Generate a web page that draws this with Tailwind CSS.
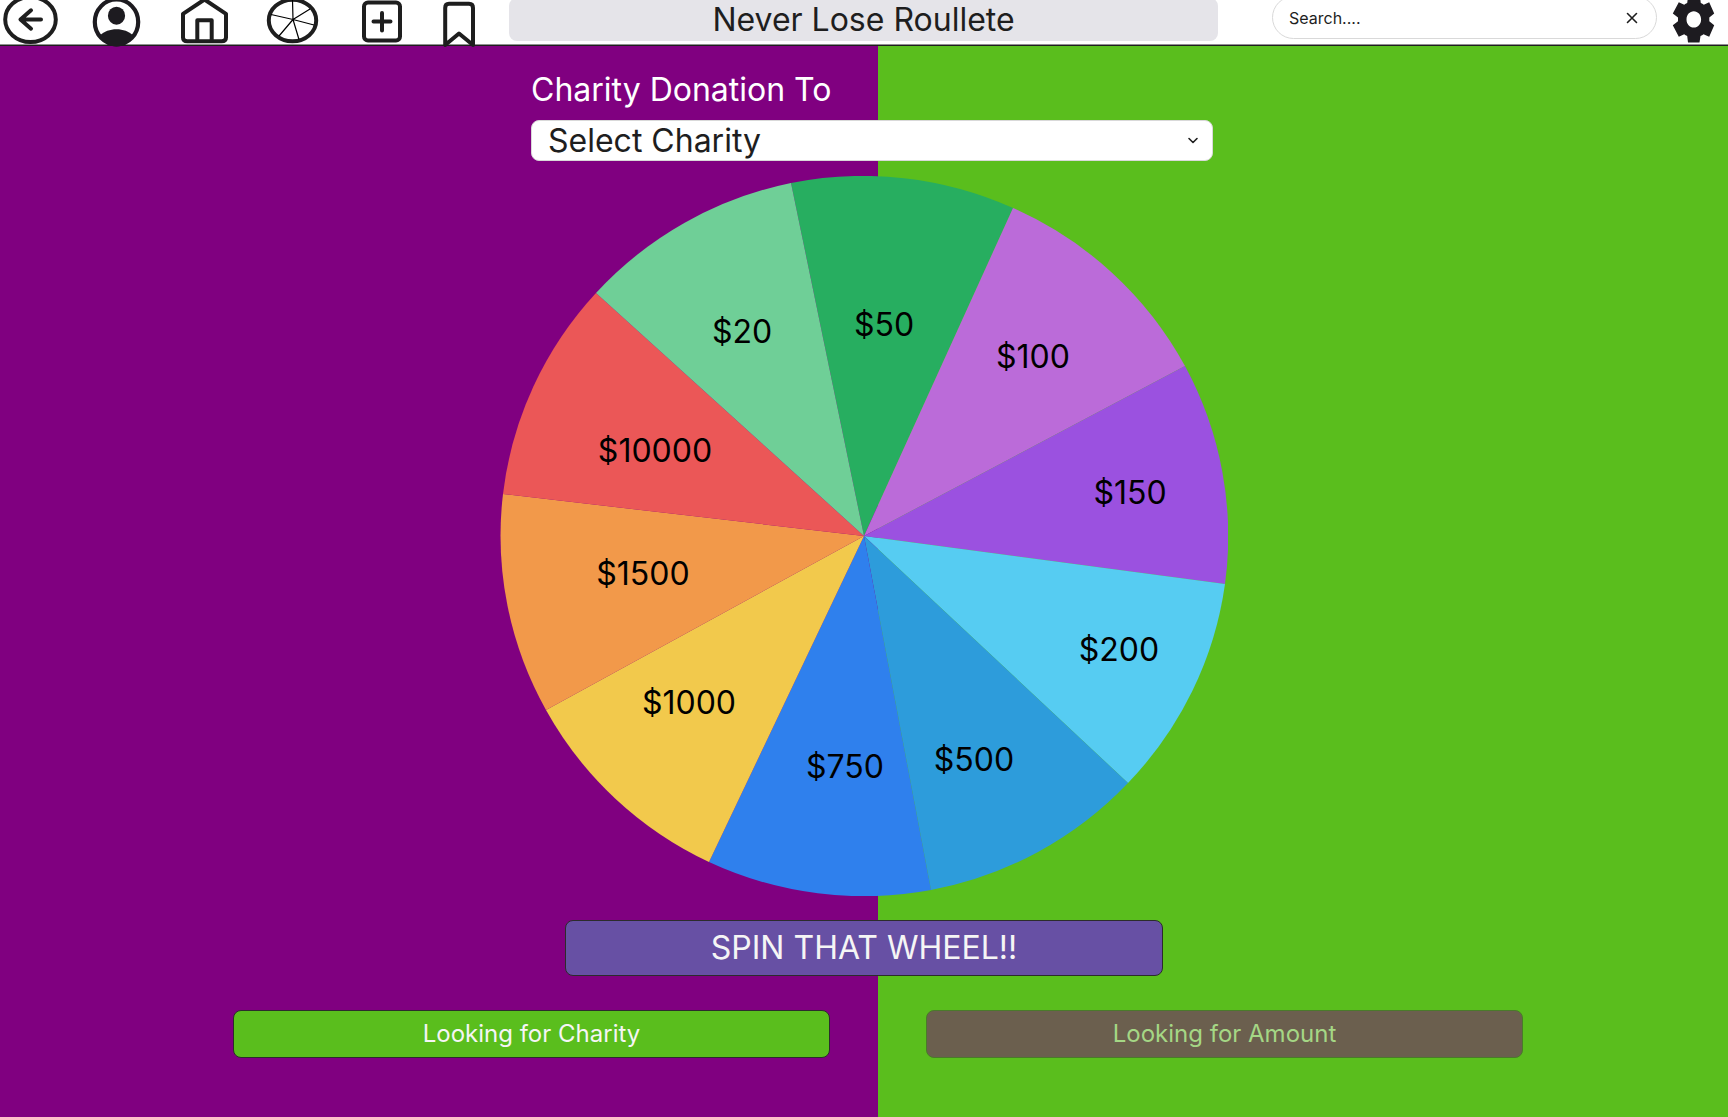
<!DOCTYPE html>
<html lang="en">
<head>
<meta charset="utf-8">
<meta name="viewport" content="width=device-width, initial-scale=1">
<title>Never Lose Roullete</title>
<script src="https://cdn.jsdelivr.net/npm/@tailwindcss/browser@4"></script>
</head>
<body class="flex min-h-screen flex-col overflow-x-hidden bg-[linear-gradient(to_right,#800080_50.81%,#5abe1d_50.81%)] font-['Inter',sans-serif] text-[#1e1e1e]">

<header class="relative flex h-[46px] items-start border-b border-[#1e1e1e] bg-white pr-[13px] shadow-[inset_0_-1px_0_#918f91]">
  <nav aria-label="Main" class="grid shrink-0 grid-cols-[88px_88px_88px_88px_88px_34px] pl-[3px]">
    <a href="#back" aria-label="Back">
      <svg class="h-12 w-14 overflow-visible" viewBox="0 0 56 48" fill="none" stroke="#1e1e1e" stroke-width="4" stroke-linecap="round" stroke-linejoin="round">
        <ellipse cx="27.5" cy="19.5" rx="25.3" ry="22.5"/>
        <path d="M38 19.5H17.500M28 10.300 17.500 19.500 28 28.700"/>
      </svg>
    </a>
    <a href="#profile" aria-label="Profile">
      <svg class="h-12 w-14 overflow-visible" viewBox="0 0 56 48" fill="#1d1b20">
        <ellipse cx="25.500" cy="22" rx="21.700" ry="22.500" fill="none" stroke="#1d1b20" stroke-width="4.200"/>
        <ellipse cx="25.500" cy="15.700" rx="8.600" ry="9"/>
        <path d="M9 35.500C13 31.500 19 29.300 25.500 29.300S38 31.500 42 35.500C39 42 33 46.500 25.500 46.500S12 42 9 35.500Z"/>
      </svg>
    </a>
    <a href="#home" aria-label="Home">
      <svg class="h-12 w-14 overflow-visible" viewBox="0 0 56 48" fill="none" stroke="#1e1e1e" stroke-width="4" stroke-linejoin="round">
        <path d="M4 13.800 25.500-.5 47 13.800V37.500Q47 41.300 42.700 41.300H8.300Q4 41.300 4 37.500Z"/>
        <path d="M18.300 41.300V20.300H32.700V41.300"/>
      </svg>
    </a>
    <a href="#wheel" aria-label="Wheel">
      <svg class="h-12 w-14 overflow-visible" viewBox="0 0 56 48" fill="none" stroke="#1e1e1e">
        <ellipse cx="25.500" cy="20.500" rx="23.700" ry="20.700" stroke-width="4"/>
        <path stroke="#000" stroke-width="1.200" d="M26 19.500 25.500 0M26 19.500 43 9M26 19.500 47 25M26 19.500 32 39.500M26 19.500 12 36M26 19.500 4 14.500"/>
      </svg>
    </a>
    <a href="#add" aria-label="Add">
      <svg class="h-12 w-14 overflow-visible" viewBox="0 0 56 48" fill="none" stroke="#1e1e1e" stroke-width="4" stroke-linecap="round">
        <rect x="9" y="2.500" width="36" height="38" rx="4"/>
        <path d="M27 13V30.500M18.500 21.500H35.500"/>
      </svg>
    </a>
    <a href="#saved" aria-label="Saved">
      <svg class="h-12 w-[34px] overflow-visible" viewBox="0 0 34 48" fill="none" stroke="#1e1e1e" stroke-width="4" stroke-linecap="round" stroke-linejoin="round">
        <path d="M2.200 45V8Q2.200 3.800 6 3.800H26Q30 3.800 30 8V45L16 33.500Z"/>
      </svg>
    </a>
  </nav>
  <h1 class="-mt-0.5 ml-8 h-[43px] flex-1 rounded-lg bg-[#e5e4e9] text-center text-[32px] leading-[43px] whitespace-nowrap">Never Lose Roullete</h1>
  <form role="search" class="-mt-1 ml-[54px] flex h-[43px] w-[385px] items-center rounded-full border border-[#d9d9d9] bg-white pr-4 pl-4">
    <input type="text" aria-label="Search" value="Search...." class="min-w-0 flex-1 bg-transparent text-base text-[#1e1e1e] outline-none">
    <button type="button" aria-label="Clear search" class="flex size-4 items-center justify-center">
      <svg class="size-4" viewBox="0 0 16 16" fill="none" stroke="#1e1e1e" stroke-width="1.600" stroke-linecap="round"><path d="M3.500 3.500 12.500 12.500M12.500 3.500 3.500 12.500"/></svg>
    </button>
  </form>
  <a href="#settings" aria-label="Settings" class="ml-4 shrink-0">
    <svg class="h-12 w-[42px] overflow-visible" viewBox="0 0 42 48" fill="#1d1b20">
      <path fill-rule="evenodd" d="M15 42.500 14.200 36Q12.500 35.200 11.200 34.200L5.800 36.800-.2 25.300 5 21.200V17.500L-.2 13.500 5.800 2.300 11.200 4.800Q12.600 3.700 14.200 3L15-3H27L27.800 3Q29.500 3.700 30.800 4.800L36.200 2.300 41.200 13.500 36.300 17.500V21.200L41.200 25.300 36.200 36.800 30.500 34.200Q29.200 35.200 27.500 36L26.500 42.500ZM20.800 11.200C16.700 11.200 13.500 14.800 13.500 19.400S16.700 27.600 20.800 27.600 28.100 24 28.100 19.400 24.900 11.200 20.800 11.200Z"/>
    </svg>
  </a>
</header>

<main class="flex flex-1 flex-col items-center pt-6 pb-12">
  <div class="w-full max-w-[698px] pl-4">
    <label for="charity" class="block text-[32px] leading-10 text-white">Charity Donation To</label>
    <div class="relative mt-[10px]">
      <select id="charity" class="block h-[41px] w-full appearance-none rounded-lg border border-[#d9d9d9] bg-white pr-10 pl-4 text-[32px] leading-10 text-[#1e1e1e]">
        <option>Select Charity</option>
      </select>
      <svg class="pointer-events-none absolute top-3 right-3 size-4" viewBox="0 0 16 16" fill="none" stroke="#1e1e1e" stroke-width="1.600" stroke-linecap="round" stroke-linejoin="round"><path d="M4 6.500 8 10.500 12 6.500"/></svg>
    </div>
  </div>

  <svg class="mt-[15px] h-auto w-full max-w-[728px]" viewBox="0 0 728 720" role="img" aria-label="Donation wheel">
    <path fill="#27ae60" d="M364 360 291 7A364 360 0 0 1 513 32Z"/>
    <path fill="#bb6bd9" d="M364 360 513 32A364 360 0 0 1 685 190Z"/>
    <path fill="#9b51e0" d="M364 360 685 190A364 360 0 0 1 725 408Z"/>
    <path fill="#56ccf2" d="M364 360 725 408A364 360 0 0 1 628 607Z"/>
    <path fill="#2d9cdb" d="M364 360 628 607A364 360 0 0 1 431 714Z"/>
    <path fill="#2f80ed" d="M364 360 431 714A364 360 0 0 1 209 686Z"/>
    <path fill="#f2c94c" d="M364 360 209 686A364 360 0 0 1 46 534Z"/>
    <path fill="#f2994a" d="M364 360 46 534A364 360 0 0 1 3 318Z"/>
    <path fill="#eb5757" d="M364 360 3 318A364 360 0 0 1 96 117Z"/>
    <path fill="#6fcf97" d="M364 360 96 117A364 360 0 0 1 291 7Z"/>
    <g class="text-[32px]" fill="#000" text-anchor="middle">
      <text x="242" y="167">$20</text>
      <text x="384" y="160">$50</text>
      <text x="533" y="192">$100</text>
      <text x="630" y="328">$150</text>
      <text x="619" y="485">$200</text>
      <text x="474" y="595">$500</text>
      <text x="345" y="602">$750</text>
      <text x="189" y="538">$1000</text>
      <text x="143" y="409">$1500</text>
      <text x="155" y="286">$10000</text>
    </g>
  </svg>

  <button type="button" class="mt-6 h-14 w-full max-w-[598px] rounded-lg border border-[#2c2c2c] bg-[#6750a4] text-[32px] leading-10 text-[#f5f5f5]">SPIN THAT WHEEL!!</button>

  <div class="mt-[34px] flex w-full justify-center gap-24 pl-7">
    <button type="button" class="h-12 w-full max-w-[597px] rounded-lg border border-[#2c2c2c] bg-[#5abe1d] text-2xl text-[#f5f5f5]">Looking for Charity</button>
    <button type="button" class="h-12 w-full max-w-[597px] rounded-lg border border-[#4a7a2a] bg-[#6b5f4e] text-2xl text-[#a5d785]">Looking for Amount</button>
  </div>
</main>
</body>
</html>
